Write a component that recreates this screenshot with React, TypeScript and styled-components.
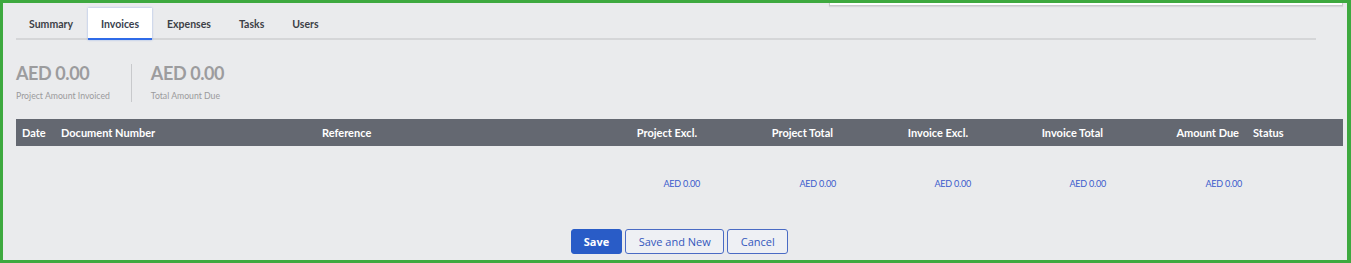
import React, { FC } from "react";
import styled, { createGlobalStyle } from "styled-components";

const Global = createGlobalStyle`
    html, body {
        margin: 0;
        padding: 0;
        background: #eaebed;
    }
    * {
        box-sizing: border-box;
    }
`;

const Frame = styled.div`
    position: relative;
    width: 1351px;
    height: 263px;
    border: 3px solid #3ea93f;
    border-right-width: 4px;
    background: #eaebed;
    font-family: Lato, "Liberation Sans", sans-serif;
    padding: 5px 4px 0 13px;
    overflow: hidden;
`;

const DropEdge = styled.div`
    position: absolute;
    top: -3px;
    left: 826px;
    width: 514px;
    height: 6px;
    background: #fff;
    border: 1px solid #c9cacc;
    border-top: none;
    box-shadow: 0 1px 1px rgba(0, 0, 0, 0.08);
`;

const TabBar = styled.div`
    display: flex;
    width: 1300px;
    border-bottom: 2px solid #d5d6d8;
    height: 32px;
`;

const Tab = styled.div<{ $active?: boolean }>`
    height: 32px;
    margin-right: 2px;
    padding: 0 13px;
    display: flex;
    align-items: center;
    padding-top: 1px;
    font-size: 10.5px;
    font-weight: 700;
    color: ${(p) => (p.$active ? "#3a3f4e" : "#3c3f46")};
    background: ${(p) => (p.$active ? "#ffffff" : "transparent")};
    border-bottom: 2px solid ${(p) => (p.$active ? "#2f6be8" : "transparent")};
    box-shadow: ${(p) => (p.$active ? "0 0 2px rgba(60, 110, 230, 0.45)" : "none")};
    margin-bottom: -2px;
`;

const Stats = styled.div`
    display: flex;
    align-items: stretch;
    margin-top: 24px;
    height: 38px;
`;

const Stat = styled.div`
    display: flex;
    flex-direction: column;
    padding-right: 21px;
`;

const Divider = styled.div`
    width: 1px;
    background: #c8c9cc;
    margin-right: 19px;
`;

const StatValue = styled.div`
    font-size: 18px;
    letter-spacing: -0.4px;
    font-weight: 700;
    color: #9c9c9e;
    line-height: 20px;
    margin-top: -1px;
`;

const StatLabel = styled.div`
    font-size: 8.7px;
    color: #9a9a9c;
    margin-top: 7px;
    line-height: 12px;
`;

const cols = "39px 261px 251px 136px 136px 135px 135px 136px 98px";

const Table = styled.div`
    margin-top: 17px;
    width: 1327px;
`;

const HeadRow = styled.div`
    display: grid;
    grid-template-columns: ${cols};
    height: 27px;
    background: #646871;
    align-items: center;
`;

const HeadCell = styled.div<{ $right?: boolean; $wide?: boolean }>`
    padding: 0 6px 0 ${(p) => (p.$wide ? 8 : 6)}px;
    color: #ffffff;
    font-size: 11px;
    font-weight: 700;
    text-align: ${(p) => (p.$right ? "right" : "left")};
    white-space: nowrap;
`;

const TotalRow = styled.div`
    display: grid;
    grid-template-columns: ${cols};
    height: 74px;
    align-items: center;
    padding-top: 1px;
`;

const TotalCell = styled.div<{ $right?: boolean }>`
    padding: 0 3px 0 6px;
    color: #3a5ccc;
    font-size: 9px;
    letter-spacing: -0.2px;
    text-align: ${(p) => (p.$right ? "right" : "left")};
    white-space: nowrap;
`;

const Actions = styled.div`
    display: flex;
    justify-content: center;
    gap: 3px;
    width: 1327px;
    margin-top: 9px;
`;

const Button = styled.button<{ $primary?: boolean }>`
    height: 25px;
    padding: 0 ${(p) => (p.$primary ? 12 : 12.5)}px;
    border-radius: 3px;
    font-family: "Open Sans", Lato, sans-serif;
    font-size: 11px;
    font-weight: ${(p) => (p.$primary ? 700 : 400)};
    color: ${(p) => (p.$primary ? "#ffffff" : "#3457bd")};
    background: ${(p) => (p.$primary ? "#295cc7" : "#eef0f4")};
    border: 1px solid ${(p) => (p.$primary ? "#295cc7" : "#4a6bc4")};
    cursor: pointer;
`;

const tabs = ["Summary", "Invoices", "Expenses", "Tasks", "Users"];
const headers: { label: string; right?: boolean }[] = [
    { label: "Date" },
    { label: "Document Number" },
    { label: "Reference" },
    { label: "Project Excl.", right: true },
    { label: "Project Total", right: true },
    { label: "Invoice Excl.", right: true },
    { label: "Invoice Total", right: true },
    { label: "Amount Due", right: true },
    { label: "Status" },
];

const App: FC = () => {
    return (
        <>
            <Global />
            <Frame>
                <DropEdge />
                <TabBar>
                    {tabs.map((t) => (
                        <Tab key={t} $active={t === "Invoices"}>
                            {t}
                        </Tab>
                    ))}
                </TabBar>
                <Stats>
                    <Stat>
                        <StatValue>AED 0.00</StatValue>
                        <StatLabel>Project Amount Invoiced</StatLabel>
                    </Stat>
                    <Divider />
                    <Stat>
                        <StatValue>AED 0.00</StatValue>
                        <StatLabel>Total Amount Due</StatLabel>
                    </Stat>
                </Stats>
                <Table>
                    <HeadRow>
                        {headers.map((h) => (
                            <HeadCell key={h.label} $right={h.right} $wide={h.label === "Status"}>
                                {h.label}
                            </HeadCell>
                        ))}
                    </HeadRow>
                    <TotalRow>
                        {headers.map((h) => (
                            <TotalCell key={h.label} $right={h.right}>
                                {h.right ? "AED 0.00" : ""}
                            </TotalCell>
                        ))}
                    </TotalRow>
                </Table>
                <Actions>
                    <Button $primary>Save</Button>
                    <Button>Save and New</Button>
                    <Button>Cancel</Button>
                </Actions>
            </Frame>
        </>
    );
};

export default App;
